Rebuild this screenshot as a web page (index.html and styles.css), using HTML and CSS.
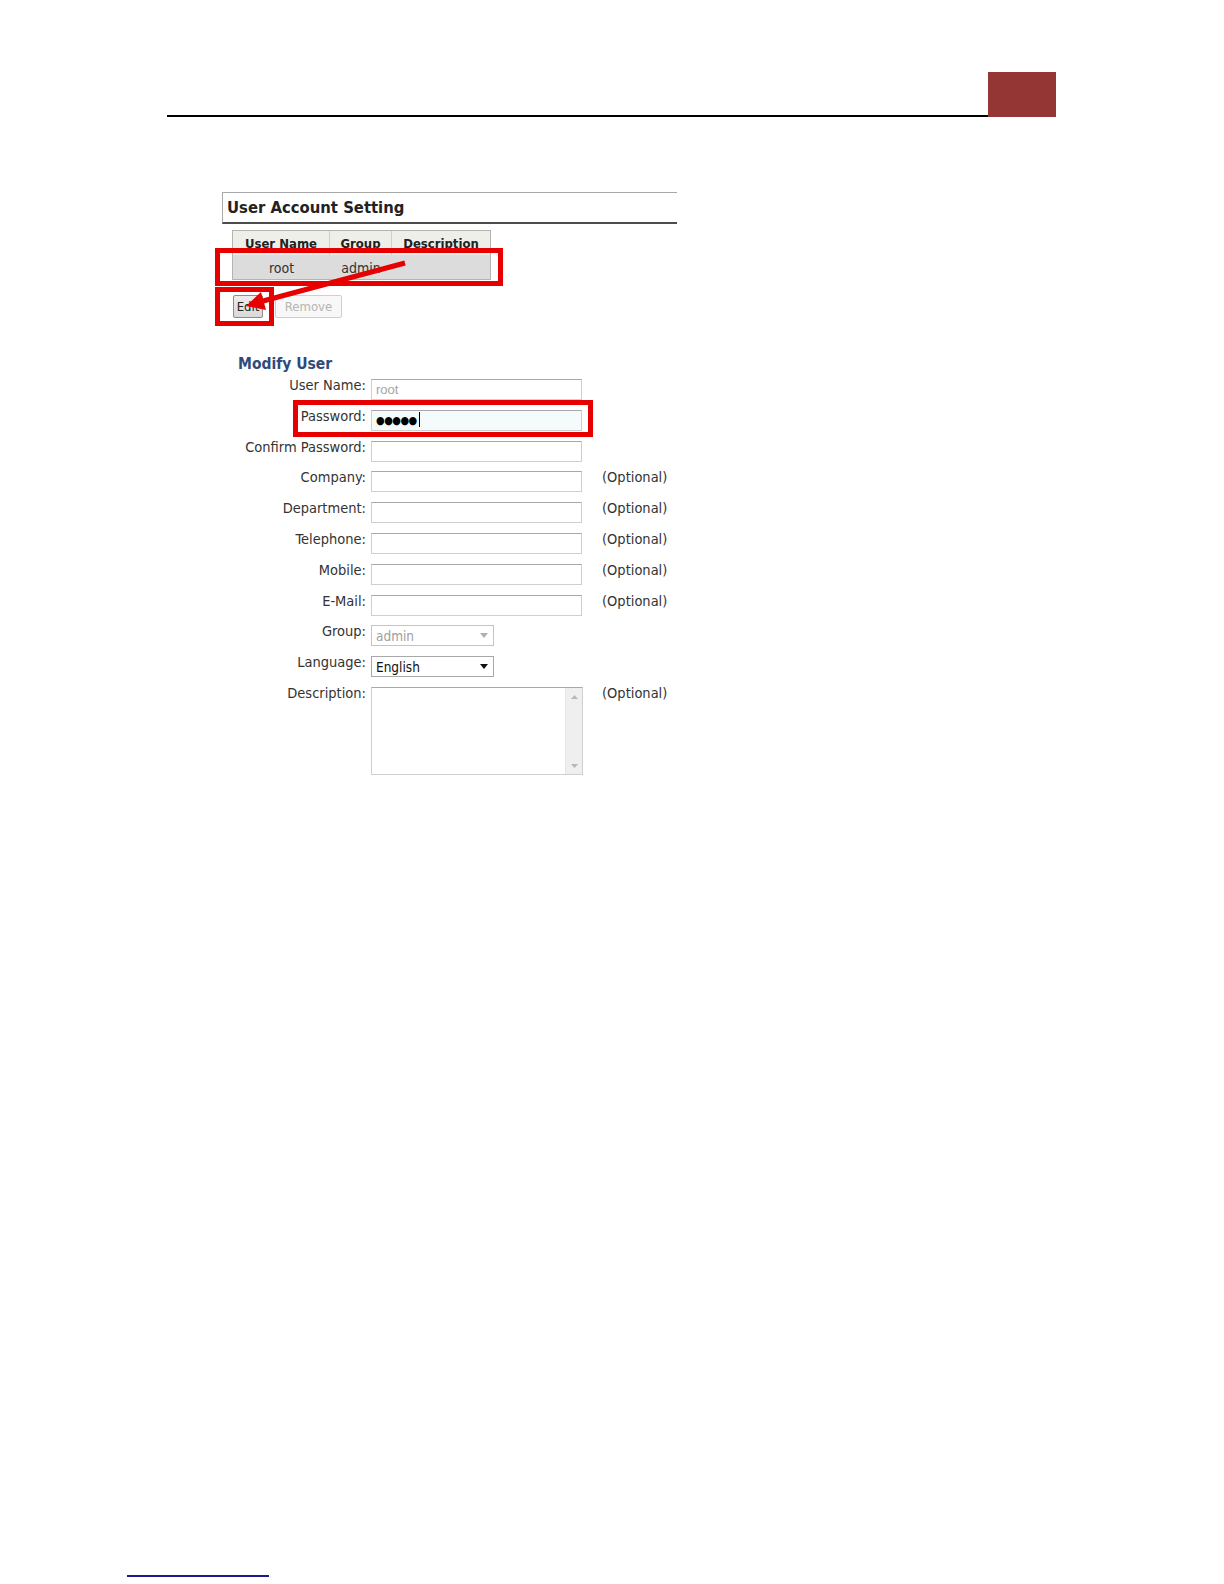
FILE: index.html
```html
<!DOCTYPE html>
<html lang="en">
<head>
  <meta charset="UTF-8" />
  <meta name="viewport" content="width=device-width, initial-scale=1.0"/>
  <title>User Account Setting</title>
  <link rel="stylesheet" href="styles.css">
</head>
<body>
  <header class="doc-header">
    <div class="rule"></div>
    <div class="tab"></div>
  </header>

  <main class="shot">
    <h2 class="box-title">User Account Setting</h2>

    <div class="user-table">
      <div class="th">User Name</div>
      <div class="th">Group</div>
      <div class="th">Description</div>
      <div class="td">root</div>
      <div class="td">admin</div>
      <div class="td"></div>
    </div>

    <div class="actions">
      <button class="btn">Edit</button>
      <button class="btn" disabled>Remove</button>
    </div>

    <h3 class="modify-title">Modify User</h3>
    <div class="form">
      <label>User Name:</label>
      <div class="field disabled">root</div>
      <span></span>

      <label>Password:</label>
      <div class="field focus">&#9679;&#9679;&#9679;&#9679;&#9679;<span class="caret"></span></div>
      <span></span>

      <label>Confirm Password:</label>
      <div class="field"></div>
      <span></span>

      <label>Company:</label>
      <div class="field"></div>
      <span class="opt">(Optional)</span>

      <label>Department:</label>
      <div class="field"></div>
      <span class="opt">(Optional)</span>

      <label>Telephone:</label>
      <div class="field"></div>
      <span class="opt">(Optional)</span>

      <label>Mobile:</label>
      <div class="field"></div>
      <span class="opt">(Optional)</span>

      <label>E-Mail:</label>
      <div class="field"></div>
      <span class="opt">(Optional)</span>

      <label>Group:</label>
      <div class="select disabled">
        <span>admin</span>
        <svg width="8" height="5" viewBox="0 0 8 5"><path d="M0 0h8L4 5z" fill="#b0b0b0"/></svg>
      </div>
      <span></span>

      <label>Language:</label>
      <div class="select">
        <span>English</span>
        <svg width="8" height="5" viewBox="0 0 8 5"><path d="M0 0h8L4 5z" fill="#111"/></svg>
      </div>
      <span></span>

      <label>Description:</label>
      <div class="textarea">
        <div class="scrollbar">
          <svg width="7" height="4" viewBox="0 0 7 4"><path d="M0 4h7L3.5 0z" fill="#b8b8b8"/></svg>
          <svg width="7" height="4" viewBox="0 0 7 4"><path d="M0 0h7L3.5 4z" fill="#b8b8b8"/></svg>
        </div>
      </div>
      <span class="opt">(Optional)</span>
    </div>

    <!-- red annotations drawn over the screenshot -->
    <div class="mark mark-row"></div>
    <div class="mark mark-edit"></div>
    <div class="mark mark-pass"></div>
    <svg class="arrow" width="200" height="130" viewBox="0 0 200 130">
      <line x1="183" y1="71" x2="41" y2="109" stroke="#e60000" stroke-width="5"/>
      <polygon points="24,114 44,118 39,100" fill="#e60000"/>
    </svg>
  </main>

  <footer class="doc-footer">
    <a class="foot-link" href="#"></a>
  </footer>
</body>
</html>
```

FILE: styles.css
```css
body {
  margin: 0;
  min-height: 1584px;
  display: flex;
  flex-direction: column;
  font-family: "DejaVu Sans", Verdana, sans-serif;
  font-stretch: condensed;
  color: #333;
  background: #fff;
}

.doc-header {
  display: flex;
  margin: 72px 0 0 167px;
  width: 889px;
  height: 45px;
}
.rule {
  flex: 1;
  border-bottom: 2px solid #000;
}
.tab {
  width: 68px;
  background: #943634;
}

.shot {
  position: relative;
  margin: 75px 0 0 222px;
  width: 460px;
}

.box-title {
  margin: 0;
  width: 450px;
  height: 29px;
  padding-left: 4px;
  border-top: 1px solid #a9a9a9;
  border-left: 1px solid #a9a9a9;
  border-bottom: 2px solid #4d4d4d;
  font-size: 16.5px;
  line-height: 29px;
  font-weight: bold;
  color: #222;
}

.user-table {
  display: grid;
  grid-template-columns: 97px 62px 98px;
  grid-template-rows: 24px 24px;
  width: 257px;
  margin: 6px 0 0 10px;
  border: 1px solid #b4b4b4;
}
.th {
  background: #efefe9;
  border-right: 1px solid #cfcfc8;
  font-size: 13px;
  font-weight: bold;
  color: #222;
  text-align: center;
  line-height: 26px;
}
.th:nth-child(3) {
  border-right: none;
}
.td {
  background: #dcdcdc;
  font-size: 14px;
  color: #333;
  text-align: center;
  line-height: 26px;
}

.actions {
  display: flex;
  gap: 12px;
  margin: 15px 0 0 11px;
}
.btn {
  width: 30px;
  height: 23px;
  padding: 0;
  border: 1px solid #8c8c8c;
  border-radius: 2px;
  background: linear-gradient(#ededed, #d9d9d9);
  font-family: inherit;
  font-stretch: condensed;
  font-size: 13px;
  color: #222;
}
.btn:disabled {
  width: 67px;
  border-color: #cfcfcf;
  background: #f8f8f8;
  color: #b4b4b4;
}

.modify-title {
  margin: 37px 0 0 16px;
  font-size: 15.5px;
  line-height: 18px;
  font-weight: bold;
  color: #2f4a7b;
}

.form {
  display: grid;
  grid-template-columns: 128px 211px auto;
  grid-auto-rows: 21px;
  column-gap: 5px;
  row-gap: 9.8px;
  margin: 6px 0 0 16px;
  font-size: 14.5px;
}
.form label {
  text-align: right;
  line-height: 12px;
}
.form .opt {
  margin-left: 15px;
  line-height: 12px;
  white-space: nowrap;
}

.field {
  box-sizing: border-box;
  height: 21px;
  padding: 0 4px;
  border: 1px solid #cfcfcf;
  border-top-color: #a8a8a8;
  background: #fff;
  font-size: 13px;
  line-height: 19px;
}
.field.disabled {
  color: #a5a5a5;
  font-family: "Liberation Sans", Arial, sans-serif;
}
.field.focus {
  background: #f5fbfb;
  color: #000;
  font-size: 11px;
  letter-spacing: -0.5px;
}
.caret {
  display: inline-block;
  width: 1px;
  height: 15px;
  margin-left: 2px;
  vertical-align: -3px;
  background: #000;
}

.select {
  box-sizing: border-box;
  width: 123px;
  height: 21px;
  display: flex;
  align-items: center;
  justify-content: space-between;
  padding: 0 5px 0 4px;
  border: 1px solid #a8a8a8;
  background: #fff;
  font-size: 13.5px;
  color: #111;
}
.select.disabled {
  border-color: #c4c4c4;
  color: #a0a0a0;
}

.textarea {
  box-sizing: border-box;
  grid-row: span 3;
  width: 212px;
  height: 88px;
  display: flex;
  justify-content: flex-end;
  border: 1px solid #cfcfcf;
  border-top-color: #a8a8a8;
  background: #fff;
}
.scrollbar {
  width: 16px;
  display: flex;
  flex-direction: column;
  justify-content: space-between;
  align-items: center;
  padding: 7px 0 6px;
  background: #efefef;
  border-left: 1px solid #e4e4e4;
}

.mark {
  position: absolute;
  border: 5px solid #e60000;
}
.mark-row {
  left: -7px;
  top: 56px;
  width: 278px;
  height: 28px;
}
.mark-edit {
  left: -7px;
  top: 95px;
  width: 49px;
  height: 29px;
}
.mark-pass {
  left: 71px;
  top: 208px;
  width: 290px;
  height: 27px;
}
.arrow {
  position: absolute;
  left: 0;
  top: 0;
}

.doc-footer {
  margin-top: auto;
  padding: 0 0 7px 127px;
}
.foot-link {
  display: block;
  width: 142px;
  border-bottom: 2px solid #1c1c92;
}
```
